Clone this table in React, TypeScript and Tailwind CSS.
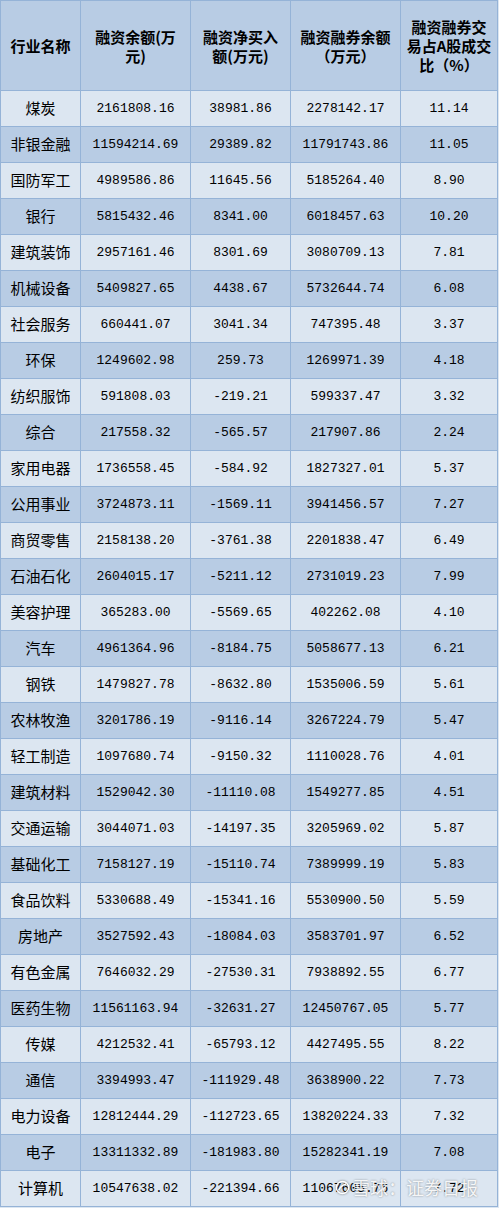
const rows: [string, string, string, string, string][] = [
  ["煤炭", "2161808.16", "38981.86", "2278142.17", "11.14"],
  ["非银金融", "11594214.69", "29389.82", "11791743.86", "11.05"],
  ["国防军工", "4989586.86", "11645.56", "5185264.40", "8.90"],
  ["银行", "5815432.46", "8341.00", "6018457.63", "10.20"],
  ["建筑装饰", "2957161.46", "8301.69", "3080709.13", "7.81"],
  ["机械设备", "5409827.65", "4438.67", "5732644.74", "6.08"],
  ["社会服务", "660441.07", "3041.34", "747395.48", "3.37"],
  ["环保", "1249602.98", "259.73", "1269971.39", "4.18"],
  ["纺织服饰", "591808.03", "-219.21", "599337.47", "3.32"],
  ["综合", "217558.32", "-565.57", "217907.86", "2.24"],
  ["家用电器", "1736558.45", "-584.92", "1827327.01", "5.37"],
  ["公用事业", "3724873.11", "-1569.11", "3941456.57", "7.27"],
  ["商贸零售", "2158138.20", "-3761.38", "2201838.47", "6.49"],
  ["石油石化", "2604015.17", "-5211.12", "2731019.23", "7.99"],
  ["美容护理", "365283.00", "-5569.65", "402262.08", "4.10"],
  ["汽车", "4961364.96", "-8184.75", "5058677.13", "6.21"],
  ["钢铁", "1479827.78", "-8632.80", "1535006.59", "5.61"],
  ["农林牧渔", "3201786.19", "-9116.14", "3267224.79", "5.47"],
  ["轻工制造", "1097680.74", "-9150.32", "1110028.76", "4.01"],
  ["建筑材料", "1529042.30", "-11110.08", "1549277.85", "4.51"],
  ["交通运输", "3044071.03", "-14197.35", "3205969.02", "5.87"],
  ["基础化工", "7158127.19", "-15110.74", "7389999.19", "5.83"],
  ["食品饮料", "5330688.49", "-15341.16", "5530900.50", "5.59"],
  ["房地产", "3527592.43", "-18084.03", "3583701.97", "6.52"],
  ["有色金属", "7646032.29", "-27530.31", "7938892.55", "6.77"],
  ["医药生物", "11561163.94", "-32631.27", "12450767.05", "5.77"],
  ["传媒", "4212532.41", "-65793.12", "4427495.55", "8.22"],
  ["通信", "3394993.47", "-111929.48", "3638900.22", "7.73"],
  ["电力设备", "12812444.29", "-112723.65", "13820224.33", "7.32"],
  ["电子", "13311332.89", "-181983.80", "15282341.19", "7.08"],
  ["计算机", "10547638.02", "-221394.66", "11067605.76", "7.72"],
];

const cjk = "font-['Noto_Sans_CJK_SC',sans-serif]";
const mono = "font-['Liberation_Mono','Noto_Sans_CJK_SC',monospace]";

export default function App() {
  return (
    <div className="relative min-h-[1208px] w-[499px] bg-[#dce6f1]">
      <table className="w-[497px] table-fixed border-collapse text-black">
        <colgroup>
          <col className="w-[80px]" />
          <col className="w-[110px]" />
          <col className="w-[100px]" />
          <col className="w-[110px]" />
          <col className="w-[97px]" />
        </colgroup>
        <thead>
          <tr className={`h-[90px] bg-[#b8cce4] text-[15px] font-bold leading-[19px] ${cjk}`}>
            <th className="border border-[#95b3d7] px-1">行业名称</th>
            <th className="border border-[#95b3d7] px-1">
              <div>融资余额(万</div>
              <div>元)</div>
            </th>
            <th className="border border-[#95b3d7] px-1">
              <div>融资净买入</div>
              <div>额(万元)</div>
            </th>
            <th className="border border-[#95b3d7] px-1">
              <div>融资融券余额</div>
              <div>（万元）</div>
            </th>
            <th className="border border-[#95b3d7] px-1">
              <div>融资融券交</div>
              <div>易占A股成交</div>
              <div>比（%）</div>
            </th>
          </tr>
        </thead>
        <tbody>
          {rows.map((r, i) => (
            <tr key={r[0]} className={`h-[36px] ${i % 2 === 0 ? "bg-[#dce6f1]" : "bg-[#b8cce4]"}`}>
              <td className={`border border-[#95b3d7] text-center text-[15px] ${cjk}`}>{r[0]}</td>
              {r.slice(1).map((v, j) => (
                <td key={j} className={`border border-[#95b3d7] text-center text-[13px] ${mono}`}>
                  {v}
                </td>
              ))}
            </tr>
          ))}
        </tbody>
      </table>
      {/* watermark */}
      <div
        className={`absolute left-[335px] top-[1175px] flex items-center gap-[2px] text-[18px] leading-[24px] text-white/90 [text-shadow:0_0_2px_rgba(0,0,0,0.45)] ${cjk}`}
      >
        <svg width="15" height="15" viewBox="0 0 16 16" className="drop-shadow-[0_0_1px_rgba(0,0,0,0.5)]">
          <circle cx="8" cy="8" r="6.5" fill="none" stroke="#fff" strokeWidth="1.6" />
          <path d="M4 11 C6 6, 9 5, 12 4" fill="none" stroke="#fff" strokeWidth="1.6" />
        </svg>
        <span>雪球：证券日报</span>
      </div>
    </div>
  );
}
